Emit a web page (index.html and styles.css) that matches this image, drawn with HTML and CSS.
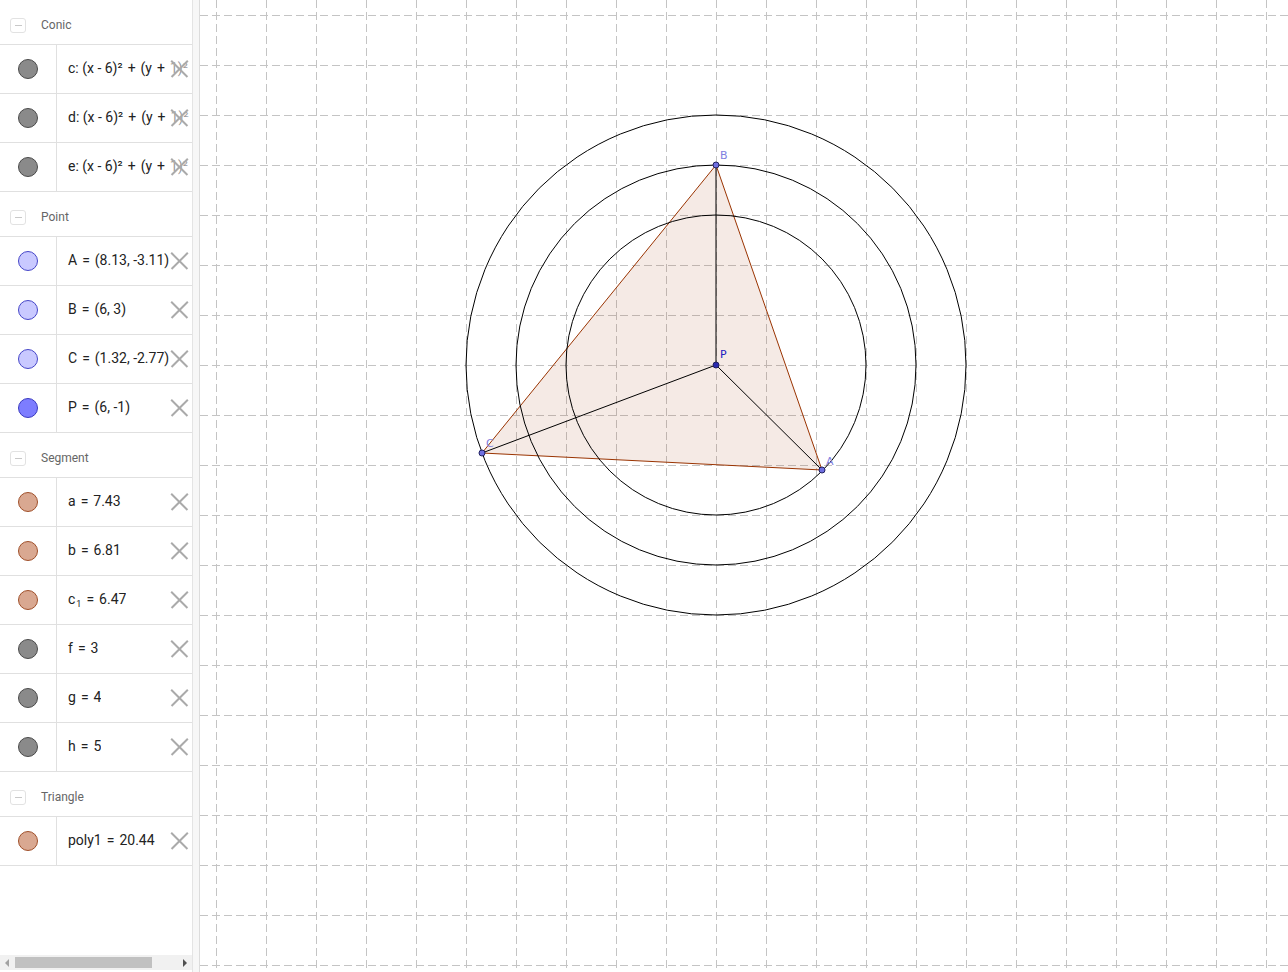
FILE: index.html
```html
<!DOCTYPE html>
<html lang="en">
<head>
    <meta charset="UTF-8">
    <title>Graphing</title>
    <link rel="stylesheet" href="styles.css">
</head>
<body>

<div class="app">
    <aside class="algebra">
        <div class="list">
            <div class="group">
                <span class="fold"></span><span class="group-name">Conic</span>
            </div>
            <div class="row"><div class="mark"><span class="dot dot-gray"></span></div><div class="expr">c: (x - 6)²<span class="op">+</span>(y<span class="op">+</span>1)²<span class="op">=</span>9</div><span class="del"></span></div>
            <div class="row"><div class="mark"><span class="dot dot-gray"></span></div><div class="expr">d: (x - 6)²<span class="op">+</span>(y<span class="op">+</span>1)²<span class="op">=</span>16</div><span class="del"></span></div>
            <div class="row"><div class="mark"><span class="dot dot-gray"></span></div><div class="expr">e: (x - 6)²<span class="op">+</span>(y<span class="op">+</span>1)²<span class="op">=</span>25</div><span class="del"></span></div>

            <div class="group">
                <span class="fold"></span><span class="group-name">Point</span>
            </div>
            <div class="row"><div class="mark"><span class="dot dot-point"></span></div><div class="expr">A<span class="op">=</span>(8.13, -3.11)</div><span class="del"></span></div>
            <div class="row"><div class="mark"><span class="dot dot-point"></span></div><div class="expr">B<span class="op">=</span>(6, 3)</div><span class="del"></span></div>
            <div class="row"><div class="mark"><span class="dot dot-point"></span></div><div class="expr">C<span class="op">=</span>(1.32, -2.77)</div><span class="del"></span></div>
            <div class="row"><div class="mark"><span class="dot dot-free"></span></div><div class="expr">P<span class="op">=</span>(6, -1)</div><span class="del"></span></div>

            <div class="group">
                <span class="fold"></span><span class="group-name">Segment</span>
            </div>
            <div class="row"><div class="mark"><span class="dot dot-seg"></span></div><div class="expr">a<span class="op">=</span>7.43</div><span class="del"></span></div>
            <div class="row"><div class="mark"><span class="dot dot-seg"></span></div><div class="expr">b<span class="op">=</span>6.81</div><span class="del"></span></div>
            <div class="row"><div class="mark"><span class="dot dot-seg"></span></div><div class="expr">c<sub>1</sub><span class="op">=</span>6.47</div><span class="del"></span></div>
            <div class="row"><div class="mark"><span class="dot dot-gray"></span></div><div class="expr">f<span class="op">=</span>3</div><span class="del"></span></div>
            <div class="row"><div class="mark"><span class="dot dot-gray"></span></div><div class="expr">g<span class="op">=</span>4</div><span class="del"></span></div>
            <div class="row"><div class="mark"><span class="dot dot-gray"></span></div><div class="expr">h<span class="op">=</span>5</div><span class="del"></span></div>

            <div class="group">
                <span class="fold"></span><span class="group-name">Triangle</span>
            </div>
            <div class="row"><div class="mark"><span class="dot dot-seg"></span></div><div class="expr">poly1<span class="op">=</span>20.44</div><span class="del"></span></div>
        </div>

        <div class="hscroll">
            <span class="arrow arrow-left"></span>
            <span class="thumb"></span>
            <span class="arrow arrow-right"></span>
        </div>
    </aside>

    <div class="splitter"></div>

    <main class="graphics">
        <svg width="1088" height="972" viewBox="200 0 1088 972">
            <!-- grid -->
            <g class="grid">
                <line x1="216.5" y1="0" x2="216.5" y2="972"/><line x1="266.5" y1="0" x2="266.5" y2="972"/>
                <line x1="316.5" y1="0" x2="316.5" y2="972"/><line x1="366.5" y1="0" x2="366.5" y2="972"/>
                <line x1="416.5" y1="0" x2="416.5" y2="972"/><line x1="466.5" y1="0" x2="466.5" y2="972"/>
                <line x1="516.5" y1="0" x2="516.5" y2="972"/><line x1="566.5" y1="0" x2="566.5" y2="972"/>
                <line x1="616.5" y1="0" x2="616.5" y2="972"/><line x1="666.5" y1="0" x2="666.5" y2="972"/>
                <line x1="716.5" y1="0" x2="716.5" y2="972"/><line x1="766.5" y1="0" x2="766.5" y2="972"/>
                <line x1="816.5" y1="0" x2="816.5" y2="972"/><line x1="866.5" y1="0" x2="866.5" y2="972"/>
                <line x1="916.5" y1="0" x2="916.5" y2="972"/><line x1="966.5" y1="0" x2="966.5" y2="972"/>
                <line x1="1016.5" y1="0" x2="1016.5" y2="972"/><line x1="1066.5" y1="0" x2="1066.5" y2="972"/>
                <line x1="1116.5" y1="0" x2="1116.5" y2="972"/><line x1="1166.5" y1="0" x2="1166.5" y2="972"/>
                <line x1="1216.5" y1="0" x2="1216.5" y2="972"/><line x1="1266.5" y1="0" x2="1266.5" y2="972"/>

                <line x1="200" y1="15.5" x2="1288" y2="15.5"/><line x1="200" y1="65.5" x2="1288" y2="65.5"/>
                <line x1="200" y1="115.5" x2="1288" y2="115.5"/><line x1="200" y1="165.5" x2="1288" y2="165.5"/>
                <line x1="200" y1="215.5" x2="1288" y2="215.5"/><line x1="200" y1="265.5" x2="1288" y2="265.5"/>
                <line x1="200" y1="315.5" x2="1288" y2="315.5"/><line x1="200" y1="365.5" x2="1288" y2="365.5"/>
                <line x1="200" y1="415.5" x2="1288" y2="415.5"/><line x1="200" y1="465.5" x2="1288" y2="465.5"/>
                <line x1="200" y1="515.5" x2="1288" y2="515.5"/><line x1="200" y1="565.5" x2="1288" y2="565.5"/>
                <line x1="200" y1="615.5" x2="1288" y2="615.5"/><line x1="200" y1="665.5" x2="1288" y2="665.5"/>
                <line x1="200" y1="715.5" x2="1288" y2="715.5"/><line x1="200" y1="765.5" x2="1288" y2="765.5"/>
                <line x1="200" y1="815.5" x2="1288" y2="815.5"/><line x1="200" y1="865.5" x2="1288" y2="865.5"/>
                <line x1="200" y1="915.5" x2="1288" y2="915.5"/><line x1="200" y1="965.5" x2="1288" y2="965.5"/>
            </g>

            <!-- triangle -->
            <polygon class="tri" points="822,470 716,165 482,453"/>

            <!-- circles -->
            <circle class="conic" cx="716" cy="365" r="150"/>
            <circle class="conic" cx="716" cy="365" r="200"/>
            <circle class="conic" cx="716" cy="365" r="250"/>

            <!-- segments from P -->
            <line class="seg" x1="716" y1="365" x2="716" y2="165"/>
            <line class="seg" x1="716" y1="365" x2="822" y2="470"/>
            <line class="seg" x1="716" y1="365" x2="482" y2="453"/>

            <!-- points -->
            <circle class="pt" cx="716" cy="165" r="3"/>
            <circle class="pt" cx="822" cy="470" r="3"/>
            <circle class="pt" cx="482" cy="453" r="3"/>
            <circle class="pt pt-free" cx="716" cy="365" r="3"/>

            <text class="label" x="720" y="159">B</text>
            <text class="label" x="826" y="465">A</text>
            <text class="label" x="486" y="447">C</text>
            <text class="label label-free" x="720" y="358">P</text>
        </svg>
    </main>
</div>

</body>
</html>
```

FILE: styles.css
```css
body {
    margin: 0;
    padding: 0;
    font-family: Roboto, "Liberation Sans", sans-serif;
    background-color: #fff;
    overflow: hidden;
}

.app {
    display: flex;
    width: 1288px;
    height: 972px;
}

.algebra {
    width: 193px;
    flex-shrink: 0;
    display: flex;
    flex-direction: column;
    border-right: 1px solid #e4e4e4;
    box-sizing: border-box;
    overflow: hidden;
}

.list {
    flex: 1;
}

.group {
    height: 45px;
    display: flex;
    align-items: center;
    border-bottom: 1px solid #e0e0e0;
    box-sizing: border-box;
    padding-left: 10px;
    padding-top: 6px;
}

.fold {
    width: 14px;
    height: 13px;
    border: 1px solid #e2e2e2;
    border-radius: 3px;
    position: relative;
    margin-right: 15px;
}

.fold::after {
    content: "";
    position: absolute;
    left: 4px;
    top: 6px;
    width: 7px;
    height: 1px;
    background-color: #c8c8c8;
}

.group-name {
    font-size: 12px;
    color: #666;
}

.row {
    height: 49px;
    display: flex;
    align-items: stretch;
    border-bottom: 1px solid #e0e0e0;
    box-sizing: border-box;
    position: relative;
    white-space: nowrap;
}

.mark {
    width: 57px;
    flex-shrink: 0;
    border-right: 1px solid #e0e0e0;
    box-sizing: border-box;
    display: flex;
    align-items: center;
    justify-content: center;
}

.dot {
    width: 18px;
    height: 18px;
    border-radius: 50%;
    border: 1px solid #444;
    margin-right: 1px;
}

.dot-gray {
    background-color: #8a8a8a;
    border-color: #4a4a4a;
}

.dot-point {
    background-color: #c9c9ff;
    border-color: #4646c8;
}

.dot-free {
    background-color: #7d7dff;
    border-color: #3a3ac0;
}

.dot-seg {
    background-color: #d9a891;
    border-color: #a0502a;
}

.expr {
    padding-left: 11px;
    line-height: 46px;
    font-size: 14px;
    color: #222;
    overflow: hidden;
}

.op {
    margin: 0 5px;
}

.expr sub {
    font-size: 9px;
    line-height: 0;
    vertical-align: -3px;
    margin-left: 1px;
}

.del {
    position: absolute;
    right: 4px;
    top: 15px;
    width: 17px;
    height: 17px;
    background-color: rgba(255, 255, 255, 0.55);
}

.del::before,
.del::after {
    content: "";
    position: absolute;
    left: -3px;
    top: 8px;
    width: 23px;
    height: 1.5px;
    background-color: #aaa;
    transform: rotate(45deg);
}

.del::after {
    transform: rotate(-45deg);
}

.hscroll {
    height: 15px;
    margin-bottom: 2px;
    background-color: #f1f1f1;
    display: flex;
    align-items: center;
}

.thumb {
    width: 137px;
    height: 11px;
    background-color: #c1c1c1;
    margin-left: 3px;
}

.arrow {
    width: 0;
    height: 0;
    border-top: 4px solid transparent;
    border-bottom: 4px solid transparent;
}

.arrow-left {
    border-right: 4px solid #a3a3a3;
    margin-left: 5px;
    margin-right: 3px;
}

.arrow-right {
    border-left: 4px solid #505050;
    margin-left: auto;
    margin-right: 5px;
}

.splitter {
    width: 7px;
    flex-shrink: 0;
    background-color: #f7f7f7;
    border-right: 1px solid #dcdcdc;
    box-sizing: border-box;
}

.graphics {
    flex: 1;
    overflow: hidden;
}

.graphics svg {
    display: block;
}

.grid line {
    stroke: #c4c4c4;
    stroke-width: 1;
    stroke-dasharray: 8 4;
}

.tri {
    fill: rgba(153, 51, 0, 0.1);
    stroke: #993300;
    stroke-width: 1;
}

.conic {
    fill: none;
    stroke: #000;
    stroke-width: 1;
}

.seg {
    stroke: #000;
    stroke-width: 1;
}

.pt {
    fill: #6f6fe0;
    stroke: #202060;
    stroke-width: 1;
}

.pt-free {
    fill: #2a2ab0;
}

.label {
    font-family: "DejaVu Sans", sans-serif;
    font-size: 11px;
    fill: #8080e0;
}

.label-free {
    fill: #2020c0;
}
```
